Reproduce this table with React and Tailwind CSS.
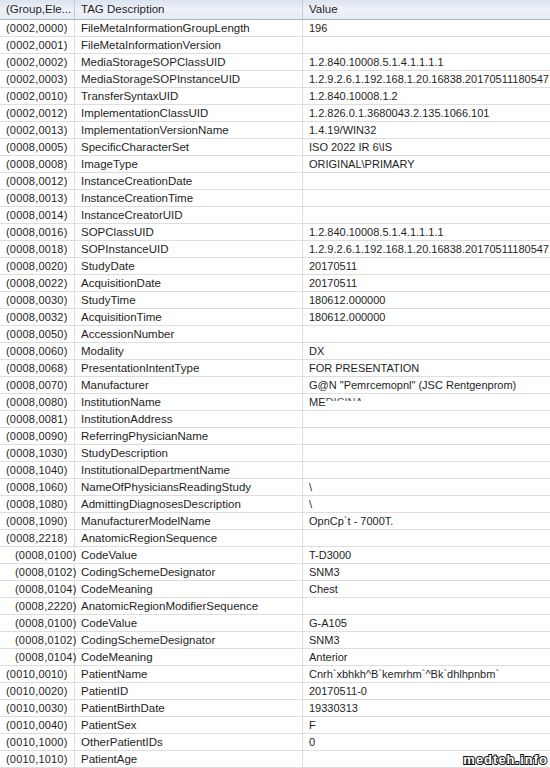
const rows = [
  ['(0002,0000)', 'FileMetaInformationGroupLength', '196'],
  ['(0002,0001)', 'FileMetaInformationVersion', ''],
  ['(0002,0002)', 'MediaStorageSOPClassUID', '1.2.840.10008.5.1.4.1.1.1.1'],
  ['(0002,0003)', 'MediaStorageSOPInstanceUID', '1.2.9.2.6.1.192.168.1.20.16838.20170511180547.1'],
  ['(0002,0010)', 'TransferSyntaxUID', '1.2.840.10008.1.2'],
  ['(0002,0012)', 'ImplementationClassUID', '1.2.826.0.1.3680043.2.135.1066.101'],
  ['(0002,0013)', 'ImplementationVersionName', '1.4.19/WIN32'],
  ['(0008,0005)', 'SpecificCharacterSet', 'ISO 2022 IR 6\\IS'],
  ['(0008,0008)', 'ImageType', 'ORIGINAL\\PRIMARY'],
  ['(0008,0012)', 'InstanceCreationDate', ''],
  ['(0008,0013)', 'InstanceCreationTime', ''],
  ['(0008,0014)', 'InstanceCreatorUID', ''],
  ['(0008,0016)', 'SOPClassUID', '1.2.840.10008.5.1.4.1.1.1.1'],
  ['(0008,0018)', 'SOPInstanceUID', '1.2.9.2.6.1.192.168.1.20.16838.20170511180547.1'],
  ['(0008,0020)', 'StudyDate', '20170511'],
  ['(0008,0022)', 'AcquisitionDate', '20170511'],
  ['(0008,0030)', 'StudyTime', '180612.000000'],
  ['(0008,0032)', 'AcquisitionTime', '180612.000000'],
  ['(0008,0050)', 'AccessionNumber', ''],
  ['(0008,0060)', 'Modality', 'DX'],
  ['(0008,0068)', 'PresentationIntentType', 'FOR PRESENTATION'],
  ['(0008,0070)', 'Manufacturer', 'G@N "Pemrcemopnl" (JSC Rentgenprom)'],
  ['(0008,0080)', 'InstitutionName', 'MASKED'],
  ['(0008,0081)', 'InstitutionAddress', ''],
  ['(0008,0090)', 'ReferringPhysicianName', ''],
  ['(0008,1030)', 'StudyDescription', ''],
  ['(0008,1040)', 'InstitutionalDepartmentName', ''],
  ['(0008,1060)', 'NameOfPhysiciansReadingStudy', '\\'],
  ['(0008,1080)', 'AdmittingDiagnosesDescription', '\\'],
  ['(0008,1090)', 'ManufacturerModelName', 'OpnCp`t - 7000T.'],
  ['(0008,2218)', 'AnatomicRegionSequence', ''],
  ['(0008,0100)', 'CodeValue', 'T-D3000', true],
  ['(0008,0102)', 'CodingSchemeDesignator', 'SNM3', true],
  ['(0008,0104)', 'CodeMeaning', 'Chest', true],
  ['(0008,2220)', 'AnatomicRegionModifierSequence', '', true],
  ['(0008,0100)', 'CodeValue', 'G-A105', true],
  ['(0008,0102)', 'CodingSchemeDesignator', 'SNM3', true],
  ['(0008,0104)', 'CodeMeaning', 'Anterior', true],
  ['(0010,0010)', 'PatientName', 'Cnrh`xbhkh^B`kemrhm`^Bk`dhlhpnbm`'],
  ['(0010,0020)', 'PatientID', '20170511-0'],
  ['(0010,0030)', 'PatientBirthDate', '19330313'],
  ['(0010,0040)', 'PatientSex', 'F'],
  ['(0010,1000)', 'OtherPatientIDs', '0'],
  ['(0010,1010)', 'PatientAge', ''],
];

function Masked() {
  return (
    <span className="flex items-start">
      ME
      <span className="block h-[7px] overflow-hidden leading-[17px] text-[#555]">DICINA&nbsp;&nbsp;...</span>
    </span>
  );
}

export default function App() {
  return (
    <div
      className="relative w-[550px] h-[768px] overflow-hidden bg-white text-[11px] text-[#1e1e1e]"
      style={{ fontFamily: '"Liberation Sans", Arial, sans-serif' }}
    >
      <div className="flex h-[20px] border-b border-[#aab3c0] bg-gradient-to-b from-[#dbe4f0] via-[#eef2f8] to-[#e6ecf4] leading-[19px] text-[11.5px] whitespace-nowrap">
        <div className="w-[75px] shrink-0 border-r border-[#c6ccd6] pl-[6px] overflow-hidden">(Group,Ele...</div>
        <div className="w-[228px] shrink-0 border-r border-[#c6ccd6] pl-[6px]">TAG Description</div>
        <div className="flex-1 pl-[6px]">Value</div>
      </div>
      {rows.map(([tag, desc, val, nested], i) => (
        <div key={i} className="flex h-[17px] border-b border-[#dedede] leading-[16px] whitespace-nowrap">
          <div className={`w-[75px] shrink-0 border-r border-[#dedede] tracking-[0.2px] ${nested ? 'pl-[15px]' : 'pl-[6px]'}`}>{tag}</div>
          <div className="w-[228px] shrink-0 border-r border-[#dedede] pl-[6px] overflow-hidden text-[11.5px]">{desc}</div>
          <div className="flex-1 pl-[6px] overflow-hidden">{val === 'MASKED' ? <Masked /> : val}</div>
        </div>
      ))}
      <div
        className="absolute right-[2px] bottom-[1px] text-[13px] font-bold tracking-[1px] leading-[14px] text-white"
        style={{ WebkitTextStroke: '2px #111', paintOrder: 'stroke fill' }}
      >
        medteh.info
      </div>
    </div>
  );
}
